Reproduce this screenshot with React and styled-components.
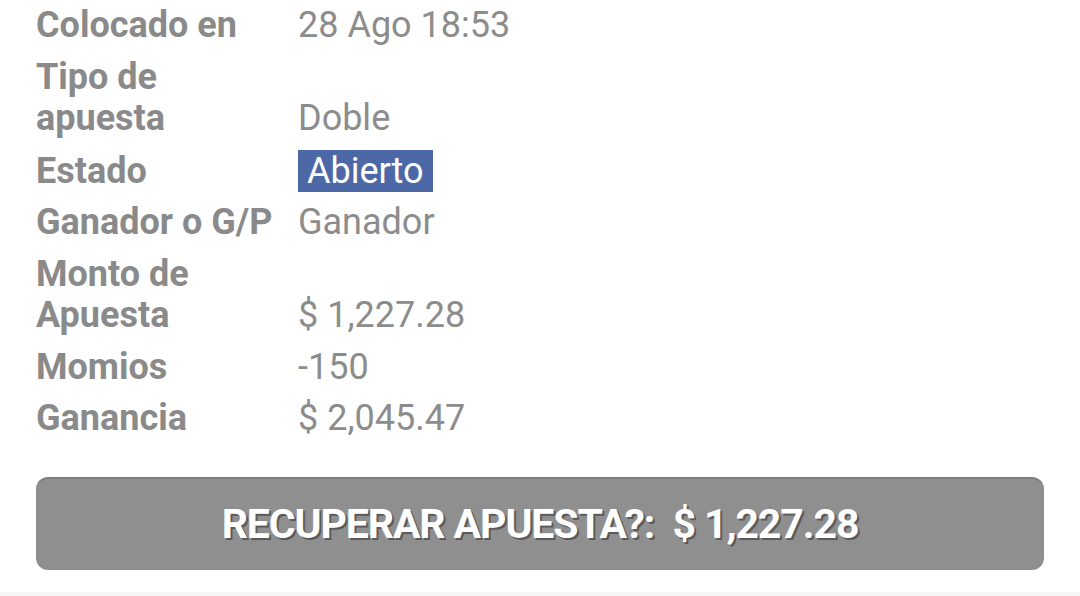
import React from 'react';
import styled, { createGlobalStyle } from 'styled-components';

const GlobalStyle = createGlobalStyle`
  html, body {
    margin: 0;
    padding: 0;
    background: #ffffff;
  }
  body {
    font-family: Roboto, "Liberation Sans", Arial, sans-serif;
  }
`;

const rows = [
  { label: 'Colocado en', value: '28 Ago 18:53' },
  { label: 'Tipo de apuesta', value: 'Doble' },
  { label: 'Estado', value: 'Abierto', badge: true },
  { label: 'Ganador o G/P', value: 'Ganador' },
  { label: 'Monto de Apuesta', value: '$ 1,227.28' },
  { label: 'Momios', value: '-150' },
  { label: 'Ganancia', value: '$ 2,045.47' },
];

const App = () => {
  return (
    <Page>
      <GlobalStyle />
      <Details>
        {rows.map((row) => (
          <React.Fragment key={row.label}>
            <Label>{row.label}</Label>
            <Value>{row.badge ? <Badge>{row.value}</Badge> : row.value}</Value>
          </React.Fragment>
        ))}
      </Details>
      <RecoverButton>RECUPERAR APUESTA?:&nbsp; $ 1,227.28</RecoverButton>
      <BottomEdge />
    </Page>
  );
};

export default App;

const Page = styled.div`
  width: 1080px;
  height: 596px;
  overflow: hidden;
  padding: 5px 36px 0;
  box-sizing: border-box;
  display: flex;
  flex-direction: column;
  position: relative;
`;

const Details = styled.div`
  display: grid;
  grid-template-columns: 250px 1fr;
  column-gap: 12px;
  row-gap: 10px;
  align-items: end;
`;

const Label = styled.div`
  font-size: 36px;
  line-height: 41.5px;
  font-weight: 700;
  color: #8a8a8a;
`;

const Value = styled.div`
  font-size: 36px;
  line-height: 41.5px;
  font-weight: 400;
  color: #8c8c8c;
`;

const Badge = styled.span`
  display: inline-block;
  background: #4c68a6;
  color: #ffffff;
  padding: 0 9px;
  line-height: 42px;
`;

const RecoverButton = styled.div`
  margin-top: 37px;
  height: 93px;
  border-radius: 12px;
  background: #8f8f8f;
  border-top: 2px solid #7f7f7f;
  box-sizing: border-box;
  display: flex;
  align-items: center;
  justify-content: center;
  color: #ffffff;
  font-size: 41px;
  font-weight: 700;
  letter-spacing: -1.1px;
  text-shadow: 2px 2px 0 #5a5a5a;
  white-space: pre;
`;

const BottomEdge = styled.div`
  position: absolute;
  left: 0;
  right: 0;
  bottom: 0;
  height: 4px;
  background: #f6f6f6;
`;
